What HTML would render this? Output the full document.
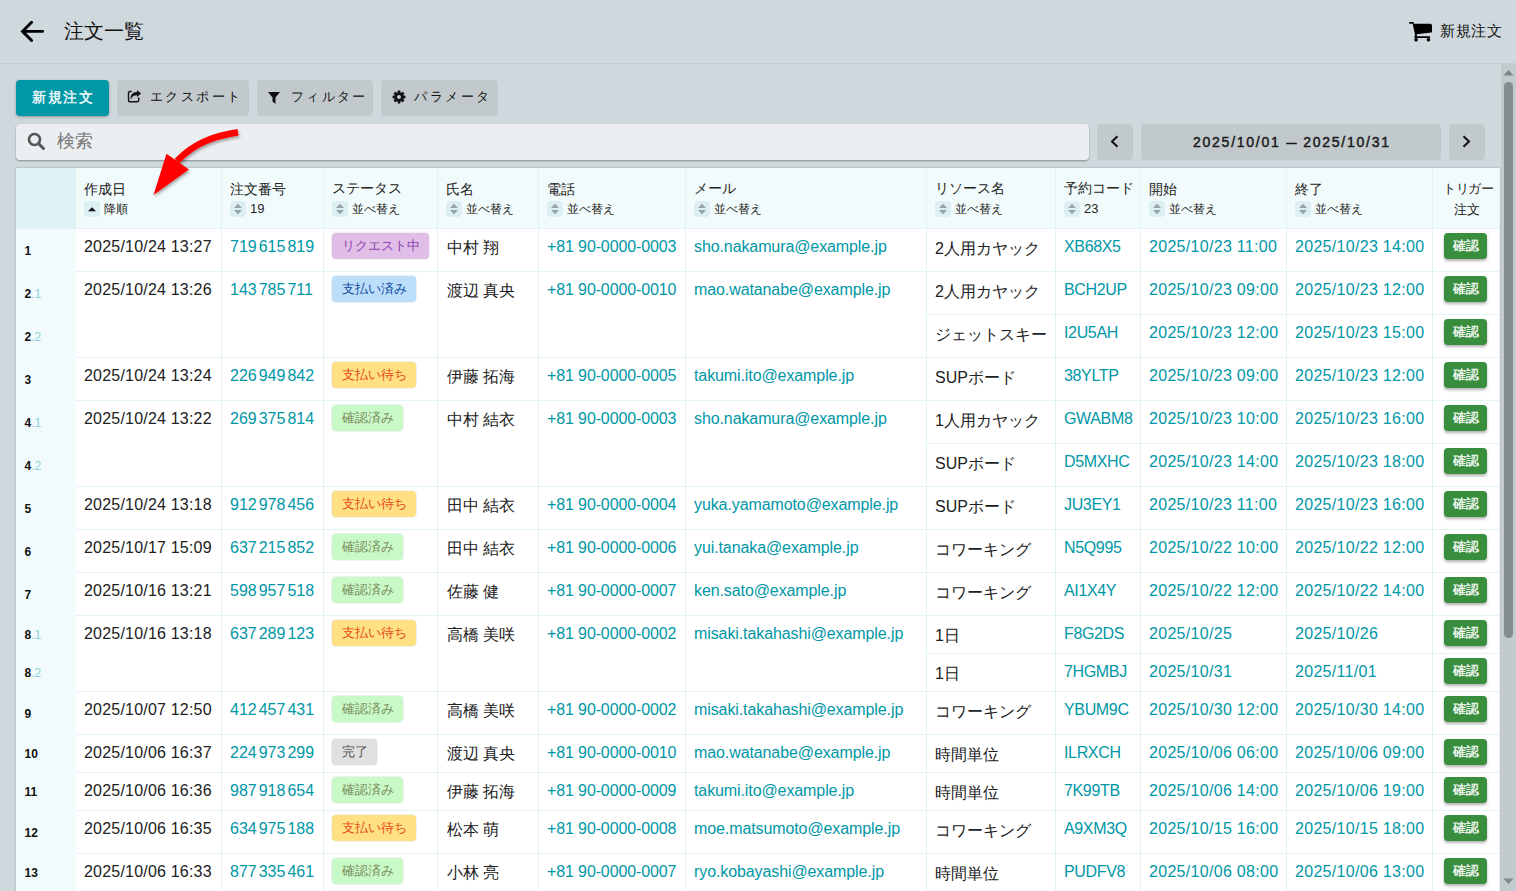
<!DOCTYPE html>
<html lang="ja"><head><meta charset="utf-8">
<style>
*{box-sizing:border-box}
html,body{margin:0;padding:0;width:1516px;height:891px;overflow:hidden}
body{background:#cfd8dc;font-family:"Liberation Sans",sans-serif;position:relative;color:#212121}
.t,.b,.chip,.ok,.rn,.ht,.hl,.sb,.abs{position:absolute;white-space:nowrap}
.g{margin-left:2px}
.chip{height:26px;line-height:26px;font-size:13px;padding:0 9.5px;border-radius:4px;box-shadow:0 0 0 1px rgba(0,0,0,0.06)}
.ok{width:43px;height:26px;line-height:26px;font-size:12.5px;text-align:center;color:#fff;background:#388e3c;border-radius:4px;box-shadow:0 2px 3px rgba(0,0,0,0.3);-webkit-text-stroke:0.3px #fff}
.rn{font-size:12px;line-height:12px;font-weight:bold;color:#111}
.sub{font-weight:normal;color:#8fd0dc}
.ht{font-size:14px;line-height:16px;color:#222}
.hl{font-size:13px;line-height:16px;color:#222}
.sb{width:16px;height:16px;border-radius:4px;background:#dcf0f3}
.btn{position:absolute;top:80px;height:36px;border-radius:4px;background:#c2c9cc;color:#222;font-size:13px;line-height:36px;white-space:nowrap}
</style></head><body>
<!-- top bar -->
<div class="abs" style="left:0;top:0;width:1516px;height:63px;background:#cfd8dc"></div>
<div class="abs" style="left:0;top:63px;width:1516px;height:1px;background:#c3ccd0"></div>
<svg style="position:absolute;left:16px;top:16px" width="32" height="32" viewBox="0 0 32 32"><path d="M26.6 15.4 H6.5 M15.6 6.3 L6.5 15.4 L15.6 24.5" stroke="#000" stroke-width="2.9" fill="none" stroke-linecap="round" stroke-linejoin="miter"/></svg>
<div class="abs" style="left:64px;top:20px;font-size:20px;line-height:22px;color:#111">注文一覧</div>
<svg style="position:absolute;left:1409px;top:22px" width="23" height="19.5" viewBox="0 0 1664 1408"><path fill="#000" d="M640 1280q0 52-38 90t-90 38-90-38-38-90 38-90 90-38 90 38 38 90zm896 0q0 52-38 90t-90 38-90-38-38-90 38-90 90-38 90 38 38 90zm128-1088v512q0 24-16.5 42.5T1607 767L563 889q13 60 13 70 0 16-24 64h920q26 0 45 19t19 45-19 45-45 19H448q-26 0-45-19t-19-45q0-11 8-31.5t16-36 21.5-40T445 951L268 128H64q-26 0-45-19T0 64t19-45 45-19h256q16 0 28.5 6.5T328 22t13 24.5 8 26 5.5 29.5 4.5 26h1201q26 0 45 19t19 45z"/></svg>
<div class="abs" style="left:1440px;top:23px;font-size:15px;line-height:16px;letter-spacing:0.5px;color:#111">新規注文</div>
<!-- toolbar -->
<div class="btn" style="left:16px;width:93px;background:#0097a7;color:#fff;text-align:center;font-size:14px;line-height:34px;letter-spacing:1.5px;text-indent:1.5px;-webkit-text-stroke:0.35px #fff;box-shadow:0 1px 3px rgba(0,0,0,0.3)">新規注文</div>
<div class="btn" style="left:117px;width:132px;padding-left:33px;line-height:33.5px;color:#111;letter-spacing:2.4px">エクスポート</div>
<svg style="position:absolute;left:127px;top:89px" width="16" height="14" viewBox="0 0 16 14"><path d="M4.6 2.5 H3 Q1.5 2.5 1.5 4 V11.3 Q1.5 12.8 3 12.8 H10.2 Q11.7 12.8 11.7 11.3 V8.6" stroke="#111" stroke-width="1.4" fill="none"/><path d="M3.6 10.8 C3.3 6 5.6 3 10 3 V0.9 L14.1 4.4 L10 7.9 V6.2 C6.6 6.2 4.9 7.5 3.6 10.8 Z" fill="#111"/></svg>
<div class="btn" style="left:257px;width:116px;padding-left:34px;line-height:33.5px;color:#111;letter-spacing:2.3px">フィルター</div>
<svg style="position:absolute;left:268px;top:92px" width="12" height="12" viewBox="0 0 12 12"><path d="M0 0 H12 L7.5 5.5 V12 L4.5 9.5 V5.5 Z" fill="#111"/></svg>
<div class="btn" style="left:381px;width:117px;padding-left:33px;line-height:33.5px;color:#111;letter-spacing:2.5px">パラメータ</div>
<svg style="position:absolute;left:391.5px;top:90px" width="14" height="14" viewBox="0 0 14 14"><g fill="#111"><rect x="5.6" y="0.6" width="2.8" height="3" rx="0.6" transform="rotate(0 7 7)"/><rect x="5.6" y="0.6" width="2.8" height="3" rx="0.6" transform="rotate(45 7 7)"/><rect x="5.6" y="0.6" width="2.8" height="3" rx="0.6" transform="rotate(90 7 7)"/><rect x="5.6" y="0.6" width="2.8" height="3" rx="0.6" transform="rotate(135 7 7)"/><rect x="5.6" y="0.6" width="2.8" height="3" rx="0.6" transform="rotate(180 7 7)"/><rect x="5.6" y="0.6" width="2.8" height="3" rx="0.6" transform="rotate(225 7 7)"/><rect x="5.6" y="0.6" width="2.8" height="3" rx="0.6" transform="rotate(270 7 7)"/><rect x="5.6" y="0.6" width="2.8" height="3" rx="0.6" transform="rotate(315 7 7)"/></g><circle cx="7" cy="7" r="3.3" fill="none" stroke="#111" stroke-width="2.6"/></svg>
<!-- search -->
<div class="abs" style="left:16px;top:124px;width:1073px;height:36px;background:#eceff1;border-radius:4px;box-shadow:0 1px 2px rgba(0,0,0,0.35)"></div>
<svg style="position:absolute;left:27px;top:132px" width="19" height="19" viewBox="0 0 19 19"><circle cx="7.5" cy="7.5" r="5.5" stroke="#555" stroke-width="2.6" fill="none"/><path d="M11.5 11.5 L16.5 16.5" stroke="#555" stroke-width="3" stroke-linecap="round"/></svg>
<div class="abs" style="left:57px;top:131px;font-size:18px;line-height:20px;color:#777">検索</div>
<div class="btn" style="left:1097px;top:124px;width:36px"></div>
<svg style="position:absolute;left:1107px;top:133px" width="14" height="16" viewBox="0 0 14 16"><path d="M10.5 3.3 L5 8.5 L10.5 13.7" stroke="#111" stroke-width="2" fill="none"/></svg>
<div class="btn" style="left:1141px;top:124px;width:300px;text-align:center;font-size:14px;letter-spacing:1.75px;text-indent:1.75px;-webkit-text-stroke:0.45px #1a1a1a;color:#1a1a1a">2025/10/01 <span style="display:inline-block;transform:scaleX(1.3)">–</span> 2025/10/31</div>
<div class="btn" style="left:1449px;top:124px;width:36px"></div>
<svg style="position:absolute;left:1460px;top:133px" width="14" height="16" viewBox="0 0 14 16"><path d="M3.5 3.3 L9 8.5 L3.5 13.7" stroke="#111" stroke-width="2" fill="none"/></svg>
<!-- table -->
<div class="abs" style="left:16px;top:168px;width:1484px;height:723px;background:#fff;box-shadow:0 0 2px rgba(0,0,0,0.25)"></div>
<div class="abs" style="left:16px;top:168px;width:1484px;height:60px;background:#f2fbfb"></div>
<div class="abs" style="left:16px;top:228px;width:60px;height:663px;background:#f2fbfb"></div>
<div class="abs" style="left:16px;top:168px;width:60px;height:60px;background:#def1f4"></div>
<div class="ht" style="left:84px;top:181px">作成日</div>
<div class="sb" style="left:84px;top:201px"><svg width="16" height="16" viewBox="0 0 16 16"><path d="M4 10.2 L8 6.2 L12 10.2 Z" fill="#111"/></svg></div>
<div class="hl" style="left:104px;top:201px;font-size:12px">降順</div>
<div class="ht" style="left:230px;top:181px">注文番号</div>
<div class="sb" style="left:230px;top:201px"><svg width="16" height="16" viewBox="0 0 16 16"><path d="M4 7 L8 2.8 L12 7 Z M4 9 L8 13.2 L12 9 Z" fill="#97a3a4"/></svg></div>
<div class="hl" style="left:250px;top:201px;font-size:13px">19</div>
<div class="ht" style="left:332px;top:179.5px">ステータス</div>
<div class="sb" style="left:332px;top:201px"><svg width="16" height="16" viewBox="0 0 16 16"><path d="M4 7 L8 2.8 L12 7 Z M4 9 L8 13.2 L12 9 Z" fill="#97a3a4"/></svg></div>
<div class="hl" style="left:352px;top:201px;font-size:12px">並べ替え</div>
<div class="ht" style="left:446px;top:181px">氏名</div>
<div class="sb" style="left:446px;top:201px"><svg width="16" height="16" viewBox="0 0 16 16"><path d="M4 7 L8 2.8 L12 7 Z M4 9 L8 13.2 L12 9 Z" fill="#97a3a4"/></svg></div>
<div class="hl" style="left:466px;top:201px;font-size:12px">並べ替え</div>
<div class="ht" style="left:547px;top:181px">電話</div>
<div class="sb" style="left:547px;top:201px"><svg width="16" height="16" viewBox="0 0 16 16"><path d="M4 7 L8 2.8 L12 7 Z M4 9 L8 13.2 L12 9 Z" fill="#97a3a4"/></svg></div>
<div class="hl" style="left:567px;top:201px;font-size:12px">並べ替え</div>
<div class="ht" style="left:694px;top:179.5px">メール</div>
<div class="sb" style="left:694px;top:201px"><svg width="16" height="16" viewBox="0 0 16 16"><path d="M4 7 L8 2.8 L12 7 Z M4 9 L8 13.2 L12 9 Z" fill="#97a3a4"/></svg></div>
<div class="hl" style="left:714px;top:201px;font-size:12px">並べ替え</div>
<div class="ht" style="left:935px;top:179.5px">リソース名</div>
<div class="sb" style="left:935px;top:201px"><svg width="16" height="16" viewBox="0 0 16 16"><path d="M4 7 L8 2.8 L12 7 Z M4 9 L8 13.2 L12 9 Z" fill="#97a3a4"/></svg></div>
<div class="hl" style="left:955px;top:201px;font-size:12px">並べ替え</div>
<div class="ht" style="left:1064px;top:179.5px">予約コード</div>
<div class="sb" style="left:1064px;top:201px"><svg width="16" height="16" viewBox="0 0 16 16"><path d="M4 7 L8 2.8 L12 7 Z M4 9 L8 13.2 L12 9 Z" fill="#97a3a4"/></svg></div>
<div class="hl" style="left:1084px;top:201px;font-size:13px">23</div>
<div class="ht" style="left:1149px;top:181px">開始</div>
<div class="sb" style="left:1149px;top:201px"><svg width="16" height="16" viewBox="0 0 16 16"><path d="M4 7 L8 2.8 L12 7 Z M4 9 L8 13.2 L12 9 Z" fill="#97a3a4"/></svg></div>
<div class="hl" style="left:1169px;top:201px;font-size:12px">並べ替え</div>
<div class="ht" style="left:1295px;top:181px">終了</div>
<div class="sb" style="left:1295px;top:201px"><svg width="16" height="16" viewBox="0 0 16 16"><path d="M4 7 L8 2.8 L12 7 Z M4 9 L8 13.2 L12 9 Z" fill="#97a3a4"/></svg></div>
<div class="hl" style="left:1315px;top:201px;font-size:12px">並べ替え</div>
<div class="ht" style="left:1443px;top:181px;font-size:12.5px;letter-spacing:-0.4px">トリガー</div>
<div class="ht" style="left:1454px;top:202px;font-size:13px">注文</div>
<div class="b" style="left:221px;top:168px;width:1px;height:723px;background:#e2f3f5"></div>
<div class="b" style="left:323px;top:168px;width:1px;height:723px;background:#e2f3f5"></div>
<div class="b" style="left:437px;top:168px;width:1px;height:723px;background:#e2f3f5"></div>
<div class="b" style="left:538px;top:168px;width:1px;height:723px;background:#e2f3f5"></div>
<div class="b" style="left:685px;top:168px;width:1px;height:723px;background:#e2f3f5"></div>
<div class="b" style="left:926px;top:168px;width:1px;height:723px;background:#e2f3f5"></div>
<div class="b" style="left:1055px;top:168px;width:1px;height:723px;background:#e2f3f5"></div>
<div class="b" style="left:1140px;top:168px;width:1px;height:723px;background:#e2f3f5"></div>
<div class="b" style="left:1286px;top:168px;width:1px;height:723px;background:#e2f3f5"></div>
<div class="b" style="left:1432px;top:168px;width:1px;height:723px;background:#e2f3f5"></div>
<div class="b" style="left:16px;top:228px;width:1484px;height:1px;background:#e2f3f5"></div>
<div class="t" style="left:25px;top:244.84px;font-size:12px;line-height:12px;color:#212121;"></div>
<div class="t" style="left:84px;top:238.96px;font-size:16px;line-height:16px;color:#212121;letter-spacing:0.2px">2025/10/24 13:27</div>
<div class="t" style="left:230px;top:238.96px;font-size:16px;line-height:16px;color:#0097a7;">719<span class="g">615</span><span class="g">819</span></div>
<div class="chip" style="left:332px;top:233px;background:#e1bee7;color:#8e44ad">リクエスト中</div>
<div class="t" style="left:447px;top:240.46px;font-size:16px;line-height:16px;color:#212121;">中村 翔</div>
<div class="t" style="left:547px;top:238.96px;font-size:16px;line-height:16px;color:#0097a7;letter-spacing:-0.12px">+81 90-0000-0003</div>
<div class="t" style="left:694px;top:238.96px;font-size:16px;line-height:16px;color:#0097a7;letter-spacing:-0.1px">sho.nakamura@example.jp</div>
<div class="rn" style="left:24.5px;top:244.84px">1</div>
<div class="t" style="left:935px;top:240.96px;font-size:16px;line-height:16px;color:#212121;">2人用カヤック</div>
<div class="t" style="left:1064px;top:238.96px;font-size:16px;line-height:16px;color:#0097a7;letter-spacing:-0.35px">XB68X5</div>
<div class="t" style="left:1149px;top:238.96px;font-size:16px;line-height:16px;color:#0097a7;letter-spacing:0.3px">2025/10/23 11:00</div>
<div class="t" style="left:1295px;top:238.96px;font-size:16px;line-height:16px;color:#0097a7;letter-spacing:0.3px">2025/10/23 14:00</div>
<div class="ok" style="left:1444px;top:233px">確認</div>
<div class="b" style="left:76px;top:271px;width:1424px;height:1px;background:#e2f3f5"></div>
<div class="t" style="left:25px;top:287.84px;font-size:12px;line-height:12px;color:#212121;"></div>
<div class="t" style="left:84px;top:281.96px;font-size:16px;line-height:16px;color:#212121;letter-spacing:0.2px">2025/10/24 13:26</div>
<div class="t" style="left:230px;top:281.96px;font-size:16px;line-height:16px;color:#0097a7;">143<span class="g">785</span><span class="g">711</span></div>
<div class="chip" style="left:332px;top:276px;background:#bbdefb;color:#0d47a1">支払い済み</div>
<div class="t" style="left:447px;top:283.46px;font-size:16px;line-height:16px;color:#212121;">渡辺 真央</div>
<div class="t" style="left:547px;top:281.96px;font-size:16px;line-height:16px;color:#0097a7;letter-spacing:-0.12px">+81 90-0000-0010</div>
<div class="t" style="left:694px;top:281.96px;font-size:16px;line-height:16px;color:#0097a7;letter-spacing:-0.1px">mao.watanabe@example.jp</div>
<div class="rn" style="left:24.5px;top:287.84px">2<span class="sub">.1</span></div>
<div class="t" style="left:935px;top:283.96px;font-size:16px;line-height:16px;color:#212121;">2人用カヤック</div>
<div class="t" style="left:1064px;top:281.96px;font-size:16px;line-height:16px;color:#0097a7;letter-spacing:-0.35px">BCH2UP</div>
<div class="t" style="left:1149px;top:281.96px;font-size:16px;line-height:16px;color:#0097a7;letter-spacing:0.3px">2025/10/23 09:00</div>
<div class="t" style="left:1295px;top:281.96px;font-size:16px;line-height:16px;color:#0097a7;letter-spacing:0.3px">2025/10/23 12:00</div>
<div class="ok" style="left:1444px;top:276px">確認</div>
<div class="b" style="left:926px;top:314px;width:574px;height:1px;background:#e2f3f5"></div>
<div class="rn" style="left:24.5px;top:330.84px">2<span class="sub">.2</span></div>
<div class="t" style="left:935px;top:326.96px;font-size:16px;line-height:16px;color:#212121;">ジェットスキー</div>
<div class="t" style="left:1064px;top:324.96px;font-size:16px;line-height:16px;color:#0097a7;letter-spacing:-0.35px">I2U5AH</div>
<div class="t" style="left:1149px;top:324.96px;font-size:16px;line-height:16px;color:#0097a7;letter-spacing:0.3px">2025/10/23 12:00</div>
<div class="t" style="left:1295px;top:324.96px;font-size:16px;line-height:16px;color:#0097a7;letter-spacing:0.3px">2025/10/23 15:00</div>
<div class="ok" style="left:1444px;top:319px">確認</div>
<div class="b" style="left:76px;top:357px;width:1424px;height:1px;background:#e2f3f5"></div>
<div class="t" style="left:25px;top:373.84px;font-size:12px;line-height:12px;color:#212121;"></div>
<div class="t" style="left:84px;top:367.96px;font-size:16px;line-height:16px;color:#212121;letter-spacing:0.2px">2025/10/24 13:24</div>
<div class="t" style="left:230px;top:367.96px;font-size:16px;line-height:16px;color:#0097a7;">226<span class="g">949</span><span class="g">842</span></div>
<div class="chip" style="left:332px;top:362px;background:#ffe082;color:#e64a19">支払い待ち</div>
<div class="t" style="left:447px;top:369.46px;font-size:16px;line-height:16px;color:#212121;">伊藤 拓海</div>
<div class="t" style="left:547px;top:367.96px;font-size:16px;line-height:16px;color:#0097a7;letter-spacing:-0.12px">+81 90-0000-0005</div>
<div class="t" style="left:694px;top:367.96px;font-size:16px;line-height:16px;color:#0097a7;letter-spacing:-0.1px">takumi.ito@example.jp</div>
<div class="rn" style="left:24.5px;top:373.84px">3</div>
<div class="t" style="left:935px;top:369.96px;font-size:16px;line-height:16px;color:#212121;">SUPボード</div>
<div class="t" style="left:1064px;top:367.96px;font-size:16px;line-height:16px;color:#0097a7;letter-spacing:-0.35px">38YLTP</div>
<div class="t" style="left:1149px;top:367.96px;font-size:16px;line-height:16px;color:#0097a7;letter-spacing:0.3px">2025/10/23 09:00</div>
<div class="t" style="left:1295px;top:367.96px;font-size:16px;line-height:16px;color:#0097a7;letter-spacing:0.3px">2025/10/23 12:00</div>
<div class="ok" style="left:1444px;top:362px">確認</div>
<div class="b" style="left:76px;top:400px;width:1424px;height:1px;background:#e2f3f5"></div>
<div class="t" style="left:25px;top:416.84px;font-size:12px;line-height:12px;color:#212121;"></div>
<div class="t" style="left:84px;top:410.96px;font-size:16px;line-height:16px;color:#212121;letter-spacing:0.2px">2025/10/24 13:22</div>
<div class="t" style="left:230px;top:410.96px;font-size:16px;line-height:16px;color:#0097a7;">269<span class="g">375</span><span class="g">814</span></div>
<div class="chip" style="left:332px;top:405px;background:#c8fac8;color:#7a8a5a">確認済み</div>
<div class="t" style="left:447px;top:412.46px;font-size:16px;line-height:16px;color:#212121;">中村 結衣</div>
<div class="t" style="left:547px;top:410.96px;font-size:16px;line-height:16px;color:#0097a7;letter-spacing:-0.12px">+81 90-0000-0003</div>
<div class="t" style="left:694px;top:410.96px;font-size:16px;line-height:16px;color:#0097a7;letter-spacing:-0.1px">sho.nakamura@example.jp</div>
<div class="rn" style="left:24.5px;top:416.84px">4<span class="sub">.1</span></div>
<div class="t" style="left:935px;top:412.96px;font-size:16px;line-height:16px;color:#212121;">1人用カヤック</div>
<div class="t" style="left:1064px;top:410.96px;font-size:16px;line-height:16px;color:#0097a7;letter-spacing:-0.35px">GWABM8</div>
<div class="t" style="left:1149px;top:410.96px;font-size:16px;line-height:16px;color:#0097a7;letter-spacing:0.3px">2025/10/23 10:00</div>
<div class="t" style="left:1295px;top:410.96px;font-size:16px;line-height:16px;color:#0097a7;letter-spacing:0.3px">2025/10/23 16:00</div>
<div class="ok" style="left:1444px;top:405px">確認</div>
<div class="b" style="left:926px;top:443px;width:574px;height:1px;background:#e2f3f5"></div>
<div class="rn" style="left:24.5px;top:459.84px">4<span class="sub">.2</span></div>
<div class="t" style="left:935px;top:455.96px;font-size:16px;line-height:16px;color:#212121;">SUPボード</div>
<div class="t" style="left:1064px;top:453.96px;font-size:16px;line-height:16px;color:#0097a7;letter-spacing:-0.35px">D5MXHC</div>
<div class="t" style="left:1149px;top:453.96px;font-size:16px;line-height:16px;color:#0097a7;letter-spacing:0.3px">2025/10/23 14:00</div>
<div class="t" style="left:1295px;top:453.96px;font-size:16px;line-height:16px;color:#0097a7;letter-spacing:0.3px">2025/10/23 18:00</div>
<div class="ok" style="left:1444px;top:448px">確認</div>
<div class="b" style="left:76px;top:486px;width:1424px;height:1px;background:#e2f3f5"></div>
<div class="t" style="left:25px;top:502.84px;font-size:12px;line-height:12px;color:#212121;"></div>
<div class="t" style="left:84px;top:496.96px;font-size:16px;line-height:16px;color:#212121;letter-spacing:0.2px">2025/10/24 13:18</div>
<div class="t" style="left:230px;top:496.96px;font-size:16px;line-height:16px;color:#0097a7;">912<span class="g">978</span><span class="g">456</span></div>
<div class="chip" style="left:332px;top:491px;background:#ffe082;color:#e64a19">支払い待ち</div>
<div class="t" style="left:447px;top:498.46px;font-size:16px;line-height:16px;color:#212121;">田中 結衣</div>
<div class="t" style="left:547px;top:496.96px;font-size:16px;line-height:16px;color:#0097a7;letter-spacing:-0.12px">+81 90-0000-0004</div>
<div class="t" style="left:694px;top:496.96px;font-size:16px;line-height:16px;color:#0097a7;letter-spacing:-0.1px">yuka.yamamoto@example.jp</div>
<div class="rn" style="left:24.5px;top:502.84px">5</div>
<div class="t" style="left:935px;top:498.96px;font-size:16px;line-height:16px;color:#212121;">SUPボード</div>
<div class="t" style="left:1064px;top:496.96px;font-size:16px;line-height:16px;color:#0097a7;letter-spacing:-0.35px">JU3EY1</div>
<div class="t" style="left:1149px;top:496.96px;font-size:16px;line-height:16px;color:#0097a7;letter-spacing:0.3px">2025/10/23 11:00</div>
<div class="t" style="left:1295px;top:496.96px;font-size:16px;line-height:16px;color:#0097a7;letter-spacing:0.3px">2025/10/23 16:00</div>
<div class="ok" style="left:1444px;top:491px">確認</div>
<div class="b" style="left:76px;top:529px;width:1424px;height:1px;background:#e2f3f5"></div>
<div class="t" style="left:25px;top:545.84px;font-size:12px;line-height:12px;color:#212121;"></div>
<div class="t" style="left:84px;top:539.96px;font-size:16px;line-height:16px;color:#212121;letter-spacing:0.2px">2025/10/17 15:09</div>
<div class="t" style="left:230px;top:539.96px;font-size:16px;line-height:16px;color:#0097a7;">637<span class="g">215</span><span class="g">852</span></div>
<div class="chip" style="left:332px;top:534px;background:#c8fac8;color:#7a8a5a">確認済み</div>
<div class="t" style="left:447px;top:541.46px;font-size:16px;line-height:16px;color:#212121;">田中 結衣</div>
<div class="t" style="left:547px;top:539.96px;font-size:16px;line-height:16px;color:#0097a7;letter-spacing:-0.12px">+81 90-0000-0006</div>
<div class="t" style="left:694px;top:539.96px;font-size:16px;line-height:16px;color:#0097a7;letter-spacing:-0.1px">yui.tanaka@example.jp</div>
<div class="rn" style="left:24.5px;top:545.84px">6</div>
<div class="t" style="left:935px;top:541.96px;font-size:16px;line-height:16px;color:#212121;">コワーキング</div>
<div class="t" style="left:1064px;top:539.96px;font-size:16px;line-height:16px;color:#0097a7;letter-spacing:-0.35px">N5Q995</div>
<div class="t" style="left:1149px;top:539.96px;font-size:16px;line-height:16px;color:#0097a7;letter-spacing:0.3px">2025/10/22 10:00</div>
<div class="t" style="left:1295px;top:539.96px;font-size:16px;line-height:16px;color:#0097a7;letter-spacing:0.3px">2025/10/22 12:00</div>
<div class="ok" style="left:1444px;top:534px">確認</div>
<div class="b" style="left:76px;top:572px;width:1424px;height:1px;background:#e2f3f5"></div>
<div class="t" style="left:25px;top:588.84px;font-size:12px;line-height:12px;color:#212121;"></div>
<div class="t" style="left:84px;top:582.96px;font-size:16px;line-height:16px;color:#212121;letter-spacing:0.2px">2025/10/16 13:21</div>
<div class="t" style="left:230px;top:582.96px;font-size:16px;line-height:16px;color:#0097a7;">598<span class="g">957</span><span class="g">518</span></div>
<div class="chip" style="left:332px;top:577px;background:#c8fac8;color:#7a8a5a">確認済み</div>
<div class="t" style="left:447px;top:584.46px;font-size:16px;line-height:16px;color:#212121;">佐藤 健</div>
<div class="t" style="left:547px;top:582.96px;font-size:16px;line-height:16px;color:#0097a7;letter-spacing:-0.12px">+81 90-0000-0007</div>
<div class="t" style="left:694px;top:582.96px;font-size:16px;line-height:16px;color:#0097a7;letter-spacing:-0.1px">ken.sato@example.jp</div>
<div class="rn" style="left:24.5px;top:588.84px">7</div>
<div class="t" style="left:935px;top:584.96px;font-size:16px;line-height:16px;color:#212121;">コワーキング</div>
<div class="t" style="left:1064px;top:582.96px;font-size:16px;line-height:16px;color:#0097a7;letter-spacing:-0.35px">AI1X4Y</div>
<div class="t" style="left:1149px;top:582.96px;font-size:16px;line-height:16px;color:#0097a7;letter-spacing:0.3px">2025/10/22 12:00</div>
<div class="t" style="left:1295px;top:582.96px;font-size:16px;line-height:16px;color:#0097a7;letter-spacing:0.3px">2025/10/22 14:00</div>
<div class="ok" style="left:1444px;top:577px">確認</div>
<div class="b" style="left:76px;top:615px;width:1424px;height:1px;background:#e2f3f5"></div>
<div class="t" style="left:25px;top:631.84px;font-size:12px;line-height:12px;color:#212121;"></div>
<div class="t" style="left:84px;top:625.96px;font-size:16px;line-height:16px;color:#212121;letter-spacing:0.2px">2025/10/16 13:18</div>
<div class="t" style="left:230px;top:625.96px;font-size:16px;line-height:16px;color:#0097a7;">637<span class="g">289</span><span class="g">123</span></div>
<div class="chip" style="left:332px;top:620px;background:#ffe082;color:#e64a19">支払い待ち</div>
<div class="t" style="left:447px;top:627.46px;font-size:16px;line-height:16px;color:#212121;">高橋 美咲</div>
<div class="t" style="left:547px;top:625.96px;font-size:16px;line-height:16px;color:#0097a7;letter-spacing:-0.12px">+81 90-0000-0002</div>
<div class="t" style="left:694px;top:625.96px;font-size:16px;line-height:16px;color:#0097a7;letter-spacing:-0.1px">misaki.takahashi@example.jp</div>
<div class="rn" style="left:24.5px;top:629.34px">8<span class="sub">.1</span></div>
<div class="t" style="left:935px;top:627.96px;font-size:16px;line-height:16px;color:#212121;">1日</div>
<div class="t" style="left:1064px;top:625.96px;font-size:16px;line-height:16px;color:#0097a7;letter-spacing:-0.35px">F8G2DS</div>
<div class="t" style="left:1149px;top:625.96px;font-size:16px;line-height:16px;color:#0097a7;letter-spacing:0.3px">2025/10/25</div>
<div class="t" style="left:1295px;top:625.96px;font-size:16px;line-height:16px;color:#0097a7;letter-spacing:0.3px">2025/10/26</div>
<div class="ok" style="left:1444px;top:620px">確認</div>
<div class="b" style="left:926px;top:653px;width:574px;height:1px;background:#e2f3f5"></div>
<div class="rn" style="left:24.5px;top:667.34px">8<span class="sub">.2</span></div>
<div class="t" style="left:935px;top:665.96px;font-size:16px;line-height:16px;color:#212121;">1日</div>
<div class="t" style="left:1064px;top:663.96px;font-size:16px;line-height:16px;color:#0097a7;letter-spacing:-0.35px">7HGMBJ</div>
<div class="t" style="left:1149px;top:663.96px;font-size:16px;line-height:16px;color:#0097a7;letter-spacing:0.3px">2025/10/31</div>
<div class="t" style="left:1295px;top:663.96px;font-size:16px;line-height:16px;color:#0097a7;letter-spacing:0.3px">2025/11/01</div>
<div class="ok" style="left:1444px;top:658px">確認</div>
<div class="b" style="left:76px;top:691px;width:1424px;height:1px;background:#e2f3f5"></div>
<div class="t" style="left:25px;top:707.84px;font-size:12px;line-height:12px;color:#212121;"></div>
<div class="t" style="left:84px;top:701.96px;font-size:16px;line-height:16px;color:#212121;letter-spacing:0.2px">2025/10/07 12:50</div>
<div class="t" style="left:230px;top:701.96px;font-size:16px;line-height:16px;color:#0097a7;">412<span class="g">457</span><span class="g">431</span></div>
<div class="chip" style="left:332px;top:696px;background:#c8fac8;color:#7a8a5a">確認済み</div>
<div class="t" style="left:447px;top:703.46px;font-size:16px;line-height:16px;color:#212121;">高橋 美咲</div>
<div class="t" style="left:547px;top:701.96px;font-size:16px;line-height:16px;color:#0097a7;letter-spacing:-0.12px">+81 90-0000-0002</div>
<div class="t" style="left:694px;top:701.96px;font-size:16px;line-height:16px;color:#0097a7;letter-spacing:-0.1px">misaki.takahashi@example.jp</div>
<div class="rn" style="left:24.5px;top:707.84px">9</div>
<div class="t" style="left:935px;top:703.96px;font-size:16px;line-height:16px;color:#212121;">コワーキング</div>
<div class="t" style="left:1064px;top:701.96px;font-size:16px;line-height:16px;color:#0097a7;letter-spacing:-0.35px">YBUM9C</div>
<div class="t" style="left:1149px;top:701.96px;font-size:16px;line-height:16px;color:#0097a7;letter-spacing:0.3px">2025/10/30 12:00</div>
<div class="t" style="left:1295px;top:701.96px;font-size:16px;line-height:16px;color:#0097a7;letter-spacing:0.3px">2025/10/30 14:00</div>
<div class="ok" style="left:1444px;top:696px">確認</div>
<div class="b" style="left:76px;top:734px;width:1424px;height:1px;background:#e2f3f5"></div>
<div class="t" style="left:25px;top:750.84px;font-size:12px;line-height:12px;color:#212121;"></div>
<div class="t" style="left:84px;top:744.96px;font-size:16px;line-height:16px;color:#212121;letter-spacing:0.2px">2025/10/06 16:37</div>
<div class="t" style="left:230px;top:744.96px;font-size:16px;line-height:16px;color:#0097a7;">224<span class="g">973</span><span class="g">299</span></div>
<div class="chip" style="left:332px;top:739px;background:#e0e0e0;color:#555555">完了</div>
<div class="t" style="left:447px;top:746.46px;font-size:16px;line-height:16px;color:#212121;">渡辺 真央</div>
<div class="t" style="left:547px;top:744.96px;font-size:16px;line-height:16px;color:#0097a7;letter-spacing:-0.12px">+81 90-0000-0010</div>
<div class="t" style="left:694px;top:744.96px;font-size:16px;line-height:16px;color:#0097a7;letter-spacing:-0.1px">mao.watanabe@example.jp</div>
<div class="rn" style="left:24.5px;top:748.34px">10</div>
<div class="t" style="left:935px;top:746.96px;font-size:16px;line-height:16px;color:#212121;">時間単位</div>
<div class="t" style="left:1064px;top:744.96px;font-size:16px;line-height:16px;color:#0097a7;letter-spacing:-0.35px">ILRXCH</div>
<div class="t" style="left:1149px;top:744.96px;font-size:16px;line-height:16px;color:#0097a7;letter-spacing:0.3px">2025/10/06 06:00</div>
<div class="t" style="left:1295px;top:744.96px;font-size:16px;line-height:16px;color:#0097a7;letter-spacing:0.3px">2025/10/06 09:00</div>
<div class="ok" style="left:1444px;top:739px">確認</div>
<div class="b" style="left:76px;top:772px;width:1424px;height:1px;background:#e2f3f5"></div>
<div class="t" style="left:25px;top:788.84px;font-size:12px;line-height:12px;color:#212121;"></div>
<div class="t" style="left:84px;top:782.96px;font-size:16px;line-height:16px;color:#212121;letter-spacing:0.2px">2025/10/06 16:36</div>
<div class="t" style="left:230px;top:782.96px;font-size:16px;line-height:16px;color:#0097a7;">987<span class="g">918</span><span class="g">654</span></div>
<div class="chip" style="left:332px;top:777px;background:#c8fac8;color:#7a8a5a">確認済み</div>
<div class="t" style="left:447px;top:784.46px;font-size:16px;line-height:16px;color:#212121;">伊藤 拓海</div>
<div class="t" style="left:547px;top:782.96px;font-size:16px;line-height:16px;color:#0097a7;letter-spacing:-0.12px">+81 90-0000-0009</div>
<div class="t" style="left:694px;top:782.96px;font-size:16px;line-height:16px;color:#0097a7;letter-spacing:-0.1px">takumi.ito@example.jp</div>
<div class="rn" style="left:24.5px;top:786.34px">11</div>
<div class="t" style="left:935px;top:784.96px;font-size:16px;line-height:16px;color:#212121;">時間単位</div>
<div class="t" style="left:1064px;top:782.96px;font-size:16px;line-height:16px;color:#0097a7;letter-spacing:-0.35px">7K99TB</div>
<div class="t" style="left:1149px;top:782.96px;font-size:16px;line-height:16px;color:#0097a7;letter-spacing:0.3px">2025/10/06 14:00</div>
<div class="t" style="left:1295px;top:782.96px;font-size:16px;line-height:16px;color:#0097a7;letter-spacing:0.3px">2025/10/06 19:00</div>
<div class="ok" style="left:1444px;top:777px">確認</div>
<div class="b" style="left:76px;top:810px;width:1424px;height:1px;background:#e2f3f5"></div>
<div class="t" style="left:25px;top:826.84px;font-size:12px;line-height:12px;color:#212121;"></div>
<div class="t" style="left:84px;top:820.96px;font-size:16px;line-height:16px;color:#212121;letter-spacing:0.2px">2025/10/06 16:35</div>
<div class="t" style="left:230px;top:820.96px;font-size:16px;line-height:16px;color:#0097a7;">634<span class="g">975</span><span class="g">188</span></div>
<div class="chip" style="left:332px;top:815px;background:#ffe082;color:#e64a19">支払い待ち</div>
<div class="t" style="left:447px;top:822.46px;font-size:16px;line-height:16px;color:#212121;">松本 萌</div>
<div class="t" style="left:547px;top:820.96px;font-size:16px;line-height:16px;color:#0097a7;letter-spacing:-0.12px">+81 90-0000-0008</div>
<div class="t" style="left:694px;top:820.96px;font-size:16px;line-height:16px;color:#0097a7;letter-spacing:-0.1px">moe.matsumoto@example.jp</div>
<div class="rn" style="left:24.5px;top:826.84px">12</div>
<div class="t" style="left:935px;top:822.96px;font-size:16px;line-height:16px;color:#212121;">コワーキング</div>
<div class="t" style="left:1064px;top:820.96px;font-size:16px;line-height:16px;color:#0097a7;letter-spacing:-0.35px">A9XM3Q</div>
<div class="t" style="left:1149px;top:820.96px;font-size:16px;line-height:16px;color:#0097a7;letter-spacing:0.3px">2025/10/15 16:00</div>
<div class="t" style="left:1295px;top:820.96px;font-size:16px;line-height:16px;color:#0097a7;letter-spacing:0.3px">2025/10/15 18:00</div>
<div class="ok" style="left:1444px;top:815px">確認</div>
<div class="b" style="left:76px;top:853px;width:1424px;height:1px;background:#e2f3f5"></div>
<div class="t" style="left:25px;top:869.84px;font-size:12px;line-height:12px;color:#212121;"></div>
<div class="t" style="left:84px;top:863.96px;font-size:16px;line-height:16px;color:#212121;letter-spacing:0.2px">2025/10/06 16:33</div>
<div class="t" style="left:230px;top:863.96px;font-size:16px;line-height:16px;color:#0097a7;">877<span class="g">335</span><span class="g">461</span></div>
<div class="chip" style="left:332px;top:858px;background:#c8fac8;color:#7a8a5a">確認済み</div>
<div class="t" style="left:447px;top:865.46px;font-size:16px;line-height:16px;color:#212121;">小林 亮</div>
<div class="t" style="left:547px;top:863.96px;font-size:16px;line-height:16px;color:#0097a7;letter-spacing:-0.12px">+81 90-0000-0007</div>
<div class="t" style="left:694px;top:863.96px;font-size:16px;line-height:16px;color:#0097a7;letter-spacing:-0.1px">ryo.kobayashi@example.jp</div>
<div class="rn" style="left:24.5px;top:867.34px">13</div>
<div class="t" style="left:935px;top:865.96px;font-size:16px;line-height:16px;color:#212121;">時間単位</div>
<div class="t" style="left:1064px;top:863.96px;font-size:16px;line-height:16px;color:#0097a7;letter-spacing:-0.35px">PUDFV8</div>
<div class="t" style="left:1149px;top:863.96px;font-size:16px;line-height:16px;color:#0097a7;letter-spacing:0.3px">2025/10/06 08:00</div>
<div class="t" style="left:1295px;top:863.96px;font-size:16px;line-height:16px;color:#0097a7;letter-spacing:0.3px">2025/10/06 13:00</div>
<div class="ok" style="left:1444px;top:858px">確認</div>
<div class="b" style="left:76px;top:891px;width:1424px;height:1px;background:#e2f3f5"></div>
<div class="abs" style="left:1499px;top:168px;width:1px;height:723px;background:#e2f3f5"></div>
<!-- scrollbar -->
<div class="abs" style="left:1501px;top:64px;width:15px;height:827px;background:#c3cacd"></div>
<svg style="position:absolute;left:1503px;top:69px" width="11" height="7" viewBox="0 0 11 7"><path d="M0.5 6.5 L5.5 1 L10.5 6.5 Z" fill="#80878a"/></svg>
<div class="abs" style="left:1504px;top:82px;width:9px;height:556px;background:#858c8f;border-radius:4.5px"></div>
<svg style="position:absolute;left:1503px;top:878px" width="11" height="7" viewBox="0 0 11 7"><path d="M0.5 0.5 L5.5 6 L10.5 0.5 Z" fill="#80878a"/></svg>
<!-- annotation arrow -->
<svg style="position:absolute;left:0;top:0" width="1516" height="891" viewBox="0 0 1516 891">
<defs><filter id="sh" x="-20%" y="-20%" width="140%" height="140%"><feDropShadow dx="1" dy="2" stdDeviation="1.5" flood-color="#000" flood-opacity="0.35"/></filter></defs>
<g filter="url(#sh)"><path d="M238 132.3 C215 136 195 142 177 161" stroke="#f00" stroke-width="6.5" fill="none" stroke-linecap="butt"/><path d="M153.5 195 L166.5 153.7 L188.9 169.4 Z" fill="#f00"/></g>
</svg>
</body></html>
